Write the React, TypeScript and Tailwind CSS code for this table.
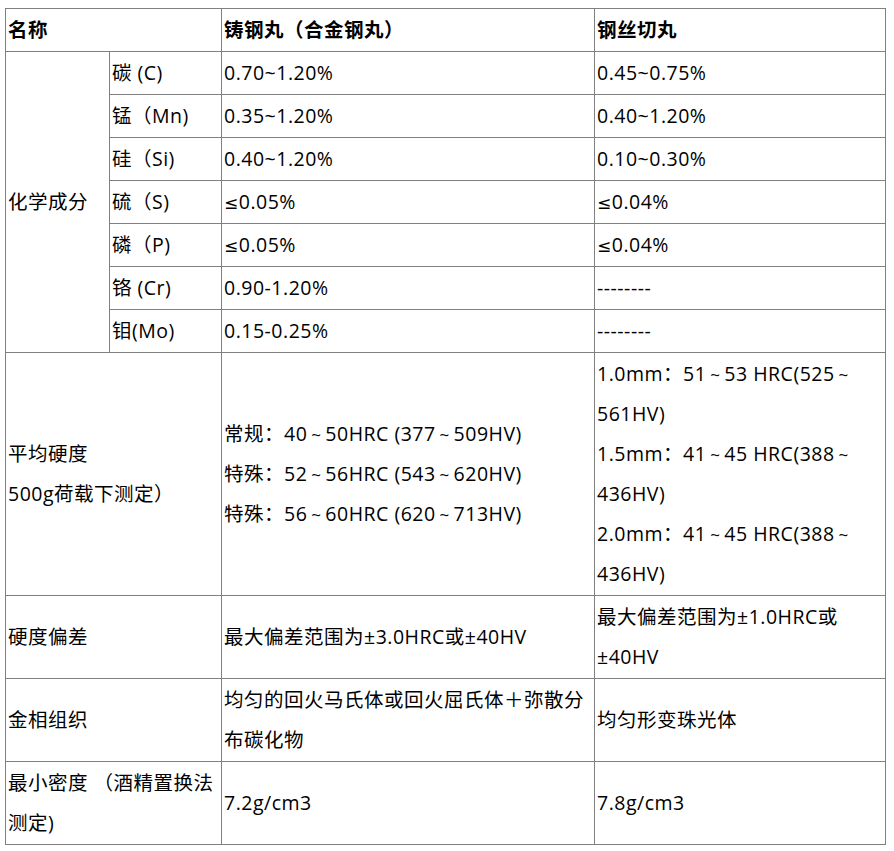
import React from 'react';

const cell = 'border border-[#808080] px-[2px] py-[1px] align-middle';

// the small spaced tilde used in the hardness ranges
function T() {
  return <span className="inline-block w-[18px] text-center text-[17px] leading-none">~</span>;
}

function Le() {
  return (
    <span className="text-[17px] leading-none" style={{ fontFamily: '"DejaVu Sans", sans-serif' }}>
      ≤
    </span>
  );
}

const chemRows: [string, React.ReactNode, React.ReactNode][] = [
  ['碳 (C)', '0.70~1.20%', '0.45~0.75%'],
  ['锰（Mn)', '0.35~1.20%', '0.40~1.20%'],
  ['硅（Si)', '0.40~1.20%', '0.10~0.30%'],
  ['硫（S)', <><Le />0.05%</>, <><Le />0.04%</>],
  ['磷（P)', <><Le />0.05%</>, <><Le />0.04%</>],
  ['铬 (Cr)', '0.90-1.20%', '--------'],
  ['钼(Mo)', '0.15-0.25%', '--------'],
];

function Line({ children }: { children: React.ReactNode }) {
  return <div className="whitespace-pre">{children}</div>;
}

export default function App() {
  return (
    <div
      className="bg-white pl-[5px] pt-[8px] pb-[6px] text-[19.5px] leading-[40px] tracking-[0.5px] text-black"
      style={{ fontFamily: '"Open Sans", "Noto Sans CJK SC", sans-serif' }}
    >
      <table className="w-[880px] table-fixed border-collapse">
        <colgroup>
          <col className="w-[104px]" />
          <col className="w-[112px]" />
          <col className="w-[373px]" />
          <col className="w-[291px]" />
        </colgroup>
        <tbody>
          <tr>
            <td colSpan={2} className={`${cell} font-bold`}>
              名称
            </td>
            <td className={`${cell} font-bold`}>铸钢丸（合金钢丸）</td>
            <td className={`${cell} font-bold`}>钢丝切丸</td>
          </tr>
          {chemRows.map(([name, cast, wire], i) => (
            <tr key={name}>
              {i === 0 ? (
                <td rowSpan={7} className={cell}>
                  化学成分
                </td>
              ) : null}
              <td className={cell}>{name}</td>
              <td className={cell}>{cast}</td>
              <td className={cell}>{wire}</td>
            </tr>
          ))}
          <tr>
            <td colSpan={2} className={cell}>
              <Line>平均硬度</Line>
              <Line>500g荷载下测定）</Line>
            </td>
            <td className={cell}>
              <Line>
                常规：40<T />50HRC (377<T />509HV)
              </Line>
              <Line>
                特殊：52<T />56HRC (543<T />620HV)
              </Line>
              <Line>
                特殊：56<T />60HRC (620<T />713HV)
              </Line>
            </td>
            <td className={cell}>
              <Line>
                1.0mm：51<T />53 HRC(525<T />
              </Line>
              <Line>561HV)</Line>
              <Line>
                1.5mm：41<T />45 HRC(388<T />
              </Line>
              <Line>436HV)</Line>
              <Line>
                2.0mm：41<T />45 HRC(388<T />
              </Line>
              <Line>436HV)</Line>
            </td>
          </tr>
          <tr>
            <td colSpan={2} className={cell}>
              硬度偏差
            </td>
            <td className={cell}>最大偏差范围为±3.0HRC或±40HV</td>
            <td className={cell}>
              <Line>最大偏差范围为±1.0HRC或</Line>
              <Line>±40HV</Line>
            </td>
          </tr>
          <tr>
            <td colSpan={2} className={cell}>
              金相组织
            </td>
            <td className={cell}>
              <Line>均匀的回火马氏体或回火屈氏体＋弥散分</Line>
              <Line>布碳化物</Line>
            </td>
            <td className={cell}>均匀形变珠光体</td>
          </tr>
          <tr>
            <td colSpan={2} className={cell}>
              <Line>最小密度 （酒精置换法</Line>
              <Line>测定)</Line>
            </td>
            <td className={cell}>7.2g/cm3</td>
            <td className={cell}>7.8g/cm3</td>
          </tr>
        </tbody>
      </table>
    </div>
  );
}
